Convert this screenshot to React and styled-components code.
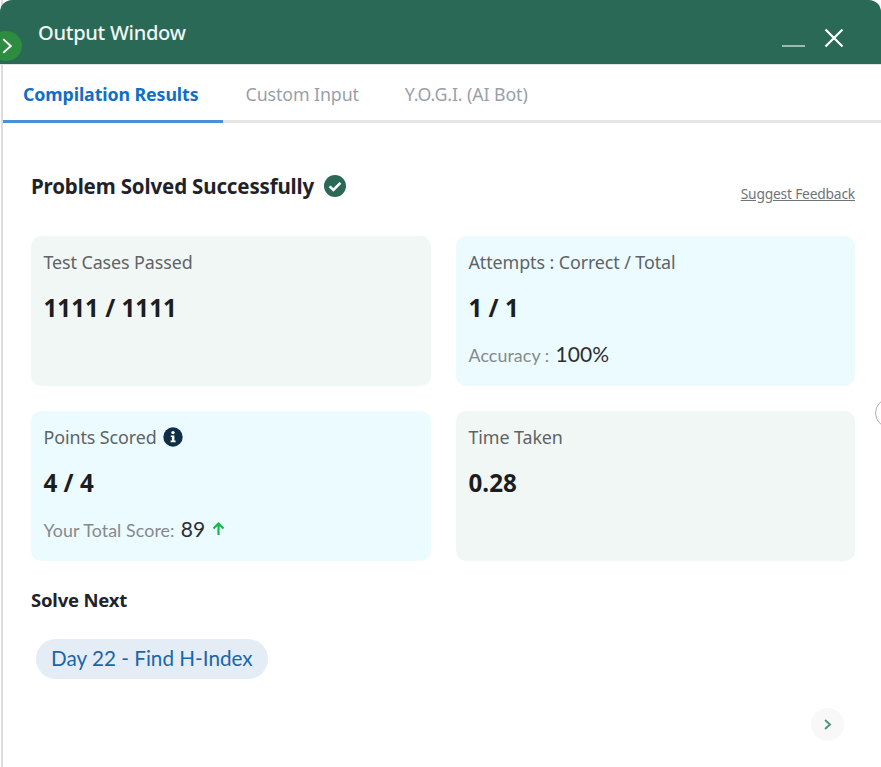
import React from 'react'
import styled, { createGlobalStyle } from 'styled-components'

const GlobalStyle = createGlobalStyle`
  html, body {
    margin: 0;
    padding: 0;
    background: #fff;
    overflow: hidden;
  }
`

const Page = styled.div`
  position: relative;
  width: 881px;
  height: 767px;
  overflow: hidden;
  background: #fff;
  font-family: "Noto Sans", "Open Sans", sans-serif;
`

const Frame = styled.div`
  height: 767px;
  box-sizing: border-box;
  border-left: 2px solid #dcdcdc;
  margin-left: 1px;
`

const Header = styled.header`
  display: flex;
  align-items: flex-start;
  justify-content: space-between;
  height: 65px;
  box-sizing: border-box;
  margin-left: -3px;
  padding: 19px 0 0 38px;
  background: #2a6956;
  border-radius: 12px 12px 0 0;
  border-bottom: 1px solid #dfe6e3;
`

const Title = styled.h1`
  margin: 0;
  font-size: 20.1px;
  font-weight: 500;
  line-height: 27px;
  letter-spacing: -0.3px;
  color: #eef5f2;
`

const WindowControls = styled.div`
  display: flex;
  align-items: flex-start;
  gap: 18px;
  padding: 9px 37px 0 0;
`

const ToggleButton = styled.button`
  position: absolute;
  left: -10px;
  top: 31px;
  width: 32px;
  height: 30px;
  padding: 0 0 0 7px;
  border: 0;
  border-radius: 50%;
  background: #2d8c3f;
  display: flex;
  align-items: center;
  justify-content: flex-start;
`

const Tabs = styled.nav`
  display: flex;
  height: 58px;
  box-sizing: border-box;
  border-bottom: 3px solid #e6e6e6;
`

const Tab = styled.div`
  box-sizing: border-box;
  height: 58px;
  padding: 16px ${p => (p.$active ? '24px' : '23px')} 0 ${p => (p.$active ? '20px' : '23px')};
  font-size: 17.8px;
  line-height: 27px;
  letter-spacing: -0.1px;
  font-weight: ${p => (p.$active ? 700 : 400)};
  color: ${p => (p.$active ? '#0f6fc6' : '#9a9fa8')};
  border-bottom: 3px solid ${p => (p.$active ? '#4a90d9' : 'transparent')};
`

const Content = styled.main`
  padding: 48px 26px 0 28px;
`

const ResultRow = styled.div`
  display: flex;
  align-items: flex-start;
  justify-content: space-between;
  height: 65px;
`

const ResultTitle = styled.h2`
  display: flex;
  align-items: center;
  gap: 9px;
  margin: 0;
  font-size: 20.5px;
  line-height: 30px;
  font-weight: 700;
  letter-spacing: -0.15px;
  color: #1f2329;
`

const FeedbackLink = styled.a`
  margin-top: 13px;
  font-size: 13.8px;
  line-height: 20px;
  letter-spacing: -0.2px;
  color: #6f7479;
  text-decoration: underline;
`

const CardGrid = styled.div`
  display: grid;
  grid-template-columns: 400px 399px;
  grid-auto-rows: 150px;
  gap: 25px;
`

const Card = styled.section`
  box-sizing: border-box;
  padding: 12px 12.5px;
  border-radius: 10px;
  background: ${p => (p.$tone === 'blue' ? '#ebfbff' : '#f1f7f5')};
`

const CardLabel = styled.div`
  display: flex;
  align-items: center;
  gap: 6px;
  height: 28px;
  font-size: 17.9px;
  line-height: 28px;
  letter-spacing: -0.1px;
  color: #5f6366;
`

const CardValue = styled.div`
  margin-top: 16px;
  height: 32px;
  font-size: 24.2px;
  line-height: 31px;
  font-weight: 700;
  color: #1b1d20;
`

const CardNote = styled.div`
  display: flex;
  align-items: baseline;
  gap: 6px;
  margin-top: 17px;
  height: 24px;
  font-family: "Lato", "Noto Sans", sans-serif;
  font-size: 17.8px;
  letter-spacing: 0.1px;
  color: #86898c;

  svg {
    align-self: center;
  }
`

const NoteValue = styled.span`
  font-size: 21px;
  color: #2b2e33;
`

const SectionTitle = styled.h3`
  margin: 26px 0 0;
  font-size: 18.5px;
  line-height: 26px;
  font-weight: 700;
  letter-spacing: -0.2px;
  color: #1f2329;
`

const Chip = styled.a`
  display: inline-block;
  margin: 26px 0 0 5px;
  padding: 0 15px;
  height: 40px;
  line-height: 38px;
  border-radius: 20px;
  background: #e4edf6;
  font-family: "Lato", "Noto Sans", sans-serif;
  font-size: 20.7px;
  color: #1b66a8;
`

const NextButton = styled.button`
  position: absolute;
  left: 811px;
  top: 708px;
  width: 33px;
  height: 33px;
  padding: 0;
  border: 0;
  border-radius: 50%;
  background: #f8f8f8;
  display: flex;
  align-items: center;
  justify-content: center;
`

const EdgeCircle = styled.div`
  position: absolute;
  left: 875px;
  top: 398px;
  width: 30px;
  height: 30px;
  box-sizing: border-box;
  border: 1.5px solid #a9adb3;
  border-radius: 50%;
  background: #fff;
`

const Chevron = ({ size, color, width }) => (
  <svg width={size} height={size} viewBox="0 0 16 16" fill="none">
    <path d="M5 2.5 L11 8 L5 13.5" stroke={color} strokeWidth={width} />
  </svg>
)

const CheckBadge = () => (
  <svg width="24" height="24" viewBox="0 0 24 24">
    <circle cx="12" cy="12" r="11" fill="#2a6956" />
    <path d="M6.6 12.4 L10.4 16 L17.4 8.8" fill="none" stroke="#fff" strokeWidth="2.6" />
  </svg>
)

const InfoBadge = () => (
  <svg width="20" height="20" viewBox="0 0 20 20">
    <circle cx="10" cy="10" r="9.7" fill="#0f2f46" />
    <circle cx="10" cy="5.6" r="1.7" fill="#fff" />
    <path d="M7.8 8.4 H11.4 V13.6 H12.6 V15.2 H7.6 V13.6 H8.9 V10 H7.8 Z" fill="#fff" />
  </svg>
)

const UpArrow = () => (
  <svg width="15" height="15" viewBox="0 0 15 15" fill="none">
    <path d="M7.5 14 V2.5 M2.5 7.5 L7.5 2.5 L12.5 7.5" stroke="#18b84a" strokeWidth="2.2" />
  </svg>
)

export default function App() {
  return (
    <Page>
      <GlobalStyle />
      <Frame>
        <Header>
          <Title>Output Window</Title>
          <WindowControls>
            <svg width="24" height="24" viewBox="0 0 24 24" fill="none">
              <path d="M0 18 H23" stroke="#9dbcb1" strokeWidth="2" />
            </svg>
            <svg width="20" height="20" viewBox="0 0 20 20" fill="none">
              <path d="M1.5 1.5 L18.5 18.5 M18.5 1.5 L1.5 18.5" stroke="#fff" strokeWidth="2.2" />
            </svg>
          </WindowControls>
        </Header>
        <Tabs>
          <Tab $active>Compilation Results</Tab>
          <Tab>Custom Input</Tab>
          <Tab>Y.O.G.I. (AI Bot)</Tab>
        </Tabs>
        <Content>
          <ResultRow>
            <ResultTitle>
              Problem Solved Successfully
              <CheckBadge />
            </ResultTitle>
            <FeedbackLink>Suggest Feedback</FeedbackLink>
          </ResultRow>
          <CardGrid>
            <Card>
              <CardLabel>Test Cases Passed</CardLabel>
              <CardValue>1111 / 1111</CardValue>
            </Card>
            <Card $tone="blue">
              <CardLabel>Attempts : Correct / Total</CardLabel>
              <CardValue>1 / 1</CardValue>
              <CardNote>
                Accuracy :<NoteValue>100%</NoteValue>
              </CardNote>
            </Card>
            <Card $tone="blue">
              <CardLabel>
                Points Scored
                <InfoBadge />
              </CardLabel>
              <CardValue>4 / 4</CardValue>
              <CardNote>
                Your Total Score:<NoteValue>89</NoteValue>
                <UpArrow />
              </CardNote>
            </Card>
            <Card>
              <CardLabel>Time Taken</CardLabel>
              <CardValue>0.28</CardValue>
            </Card>
          </CardGrid>
          <SectionTitle>Solve Next</SectionTitle>
          <Chip>Day 22 - Find H-Index</Chip>
        </Content>
      </Frame>
      <ToggleButton>
        <Chevron size={20} color="#fff" width={1.6} />
      </ToggleButton>
      <EdgeCircle />
      <NextButton>
        <Chevron size={13} color="#4f9482" width={2.4} />
      </NextButton>
    </Page>
  )
}
